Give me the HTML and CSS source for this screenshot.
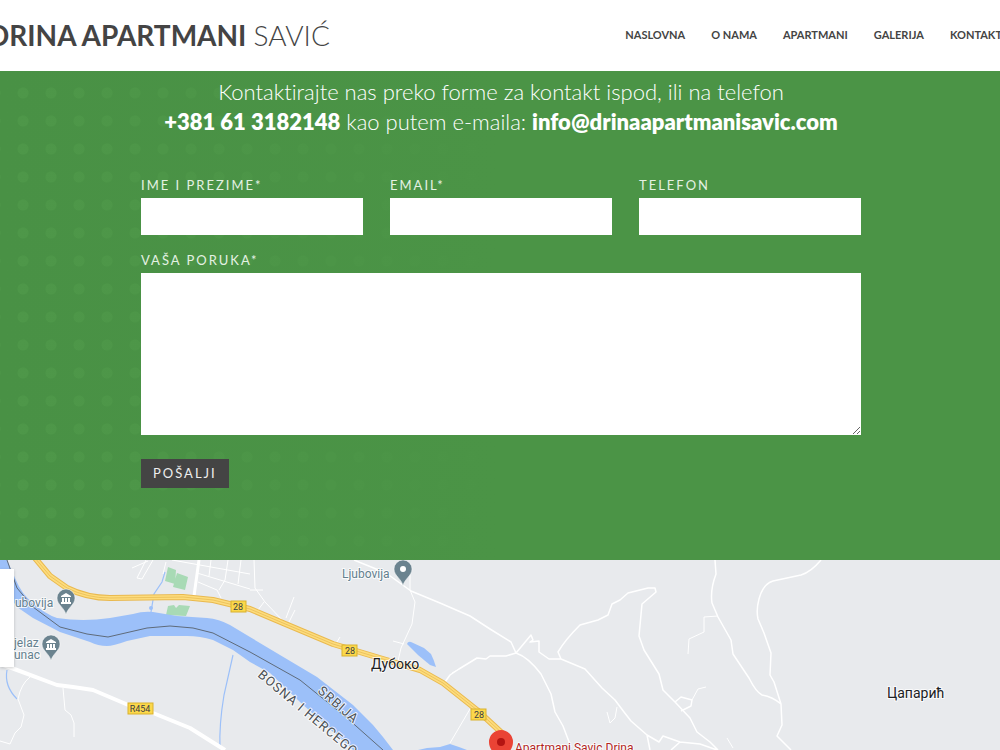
FILE: index.html
```
<!DOCTYPE html>
<html lang="sr">
<head>
  <meta charset="UTF-8" />
  <meta name="viewport" content="width=device-width, initial-scale=1" />
  <title>Drina Apartmani Savić - Kontakt</title>
  <link rel="stylesheet" href="styles.css">
</head>

<body>
  <header class="header">
    <a class="brand" href="#"><strong>DRINA APARTMANI</strong> <span>SAVIĆ</span></a>
    <nav class="menu">
      <a href="#naslovna">NASLOVNA</a>
      <a href="#onama">O NAMA</a>
      <a href="#apartmani">APARTMANI</a>
      <a href="#galerija">GALERIJA</a>
      <a href="#kontakt">KONTAKT</a>
    </nav>
  </header>

  <section class="contact" id="kontakt">
    <p class="lead">Kontaktirajte nas preko forme za kontakt ispod, ili na telefon<br>
      <strong>+381 61 3182148</strong> kao putem e-maila: <strong>info@drinaapartmanisavic.com</strong></p>

    <form class="contact-form">
      <div class="field">
        <label for="name">IME I PREZIME*</label>
        <input type="text" id="name" name="name" required>
      </div>
      <div class="field">
        <label for="email">EMAIL*</label>
        <input type="email" id="email" name="email" required>
      </div>
      <div class="field">
        <label for="phone">TELEFON</label>
        <input type="tel" id="phone" name="phone">
      </div>
      <div class="field full">
        <label for="message">VAŠA PORUKA*</label>
        <textarea id="message" name="message" required></textarea>
      </div>
      <button type="submit">POŠALJI</button>
    </form>
  </section>

  <section class="map">
    <svg viewBox="0 0 1000 190" preserveAspectRatio="xMidYMin slice" role="img" aria-label="Mapa">
      <defs>
        <path id="pin" d="M0 16C-1 9-9 6-9-1A9 9 0 0 1 9-1C9 6 1 9 0 16Z" />
        <g id="museum">
          <path d="M-5-3L0-6L5-3V-2H-5ZM-4-1h2v4h-2zM-1-1h2v4h-2zM2-1h2v4h-2zM-5 3H5V5H-5Z" />
        </g>
      </defs>

      <!-- parks -->
      <path class="park" d="M168 7l8 3-1 14-10-3zM177 13l11 4-3 13-12-3zM168 46l6-1 2 3 3-3 11 1-4 10-20-1z" />

      <!-- water -->
      <path class="water" d="M0 0H7L15 18Q22 35 33 43Q45 54 57 58Q83 62 110 58L133 54Q143 51 153 52L177 56L207 58Q219 59 230 65L250 77L280 95L317 117L353 145L373 165L383 177L393 190H353L333 172L300 142L270 113L250 102L233 90L213 80Q200 76 187 76L150 76L127 81Q113 86 107 86Q98 86 90 82L60 72L33 58L17 47L0 22Z" />
      <path class="water" d="M407 84Q408 81 411 82L424 88L431 94Q434 100 436 107L430 105L418 95Z" />
      <path class="water" d="M418 190L427 188L440 187L450 184L459 187L467 190Z" />
      <path class="stream" d="M165 12L162 22L154 34L151 52M233 95L224 135Q219 165 220 188M7 110Q4 126 17 139" />
      <circle class="water" cx="151" cy="48" r="2" />
      <path class="border" d="M7 0L17 28L33 47L60 67L87 74L108 77L147 68L170 66L193 68L213 73L250 92L300 120L347 158L383 190" />

      <!-- local roads -->
      <path class="road main" d="M0 104L17 110L57 125Q75 127 93 130L133 147L153 153L190 168L217 185L225 190" />
      <path class="road wide" d="M199 0L194 36" />
      <path class="road" d="M354 0L386 13L411 31L440 43L470 56L490 69L511 82L516 93Q528 97 541 114L551 134L555 152L563 166L571 187M516 93L506 96L490 96L486 99L477 98L459 109L450 115L445 122M516 93L531 75L533 80L530 82L539 81L539 92L549 99L561 99M561 99L558 92Q565 80 580 65L598 60L608 55L612 44L620 40L628 33L648 28L655 28L656 32L642 44L639 76L644 90L659 114L663 130L675 142L690 158L697 172L710 182L718 190M561 99L585 109L602 128L615 140L624 152L631 161L647 175L659 182L663 176L680 182L700 184L717 190M647 175L650 190M680 182L671 190" />
      <path class="road" d="M715 0L716 14Q710 30 712 43L718 57L731 80L733 94L749 118Q756 132 762 135Q773 137 781 144M821 0Q811 12 801 15L773 21Q763 24 759 39Q756 50 758 59L764 73L771 93L770 115L774 122L781 144L782 165L777 176L791 190M675 142L681 137L692 140L691 146L681 151" />
      <path class="road thin" d="M410 14V30L415 42L412 64L401 88L398 101M393 81L404 84M718 56L704 57L704 72L689 79L688 94M692 140L698 129L706 127M617 147L615 158L610 163L607 152M450 183L470 149M459 109L452 113M727 178L733 188" />
      <path class="road thin" d="M30 117Q21 124 18 139L24 155L21 167L15 173L10 184L0 181M63 128L65 150L71 155L74 163L74 177M146 0L137 18L142 19L153 0M132 8L148 1M254 0L255 28L265 42L284 62M250 30L263 30M258 50L264 42M286 58L294 37M289 62L295 50M337 82L340 77" />
      <path class="road thin" d="M172 0L250 14M197 13L250 29M198 22L217 30L221 38M228 0L225 20L219 30M211 0L209 16M241 0L238 24M166 2L163 14" />

      <!-- road 28 -->
      <path class="highway-edge" d="M35 -2L50 16L67 28Q87 38 110 38L183 37L213 40L250 49L283 63L333 84L383 99L420 110L443 123L477 150L503 174" />
      <path class="highway" d="M35 -2L50 16L67 28Q87 38 110 38L183 37L213 40L250 49L283 63L333 84L383 99L420 110L443 123L477 150L503 174" />
      <path class="highway-line" d="M35 -2L50 16L67 28Q87 38 110 38L183 37L213 40L250 49L283 63L333 84L383 99L420 110L443 123L477 150L503 174" />

      <g class="shield">
        <rect x="231" y="41" width="15" height="11" /><text x="238" y="50">28</text>
        <rect x="342" y="85" width="15" height="11" /><text x="350" y="94">28</text>
        <rect x="471" y="149" width="15" height="11" /><text x="479" y="158">28</text>
        <rect x="128" y="143" width="25" height="11" /><text x="140" y="152">R454</text>
      </g>

      <!-- labels -->
      <g class="country">
        <text transform="translate(317 132) rotate(41)">SRBIJA</text>
        <text transform="translate(257 116) rotate(40)">BOSNA I HERCEGO</text>
      </g>
      <text class="town" x="371" y="109">Дубоко</text>
      <text class="town" x="887" y="138">Цапарић</text>
      <g class="place">
        <text x="342" y="18">Ljubovija</text>
        <text x="15" y="47">ubovija</text>
        <text x="14" y="87">jelaz</text>
        <text x="14" y="99">unac</text>
      </g>

      <use class="pin" href="#pin" x="403" y="10" />
      <circle class="pin-icon" cx="403" cy="9" r="3" />
      <use class="pin" href="#pin" x="66" y="39" />
      <use class="pin-icon" href="#museum" x="66" y="39" />
      <use class="pin" href="#pin" x="51" y="85" />
      <use class="pin-icon" href="#museum" x="51" y="85" />

      <path class="marker" d="M501 205C500 197 489 192 489 182A12 12 0 0 1 513 182C513 192 502 197 501 205Z" />
      <circle class="marker-dot" cx="501" cy="182" r="4" />
      <text class="marker-label" x="515" y="192">Apartmani Savic Drina</text>
    </svg>
    <div class="map-card"></div>
  </section>
</body>
</html>
```
FILE: styles.css
```
* {
  box-sizing: border-box;
}
body {
  margin: 0;
  font-family: Lato, sans-serif;
  color: #444;
  background: #fff;
  overflow-x: hidden;
}
.header {
  display: flex;
  justify-content: space-between;
  align-items: center;
  height: 71px;
  margin: 0 -12px;
  padding-bottom: 2px;
  background: #fff;
}
.brand {
  color: #444;
  font-size: 28px;
  text-decoration: none;
  white-space: nowrap;
}
.brand strong {
  font-weight: 700;
}
.brand span {
  font-weight: 300;
}
.menu {
  display: flex;
  gap: 26px;
  margin-right: 10px;
}
.menu a {
  color: #444;
  font-size: 11px;
  font-weight: 700;
  text-decoration: none;
  white-space: nowrap;
}
.contact {
  padding: 6px 20px 72px 22px;
  color: #fff;
  background:
    linear-gradient(to right, rgba(75,148,70,0) 0, #4b9446 50%),
    radial-gradient(circle, #4e9749 5px, transparent 6px) 9px 8px / 28px 28px,
    #499145;
}
.lead {
  margin: 0 0 39px;
  font-size: 22px;
  font-weight: 300;
  line-height: 30px;
  text-align: center;
  font-variant-ligatures: none;
}
.lead strong {
  font-weight: 800;
}
.contact-form {
  display: grid;
  grid-template-columns: repeat(3, 1fr);
  column-gap: 27px;
  row-gap: 16px;
  max-width: 720px;
  margin: 0 auto;
}
.field {
  display: flex;
  flex-direction: column;
  gap: 4px;
}
.full {
  grid-column: 1 / -1;
}
.field label {
  color: #e4f1e3;
  font-size: 13px;
  line-height: 18px;
  letter-spacing: 2px;
}
.field input,
.field textarea {
  width: 100%;
  height: 37px;
  padding: 8px;
  border: 0;
  border-radius: 0;
  background: #fff;
  font: inherit;
}
.field textarea {
  height: 162px;
  resize: vertical;
}
.contact-form button {
  justify-self: start;
  height: 29px;
  margin-top: 8px;
  padding: 0 12px 2px;
  border: 0;
  color: #eee;
  background: #444;
  font-family: inherit;
  font-size: 13px;
  letter-spacing: 2px;
  cursor: pointer;
}
.map {
  position: relative;
  height: 190px;
  overflow: hidden;
  background: #e8eaed;
}
.map svg {
  display: block;
  width: 100%;
  height: 100%;
  font-family: Roboto, sans-serif;
}
.map-card {
  position: absolute;
  top: 9px;
  left: 0;
  width: 14px;
  height: 98px;
  background: #fff;
  box-shadow: 0 1px 3px rgba(0,0,0,0.2);
}
.park { fill: #a8dab5; }
.water { fill: #9cc0f9; }
.stream {
  fill: none;
  stroke: #9cc0f9;
  stroke-width: 1.2;
}
.border {
  fill: none;
  stroke: #5f6b7a;
  stroke-width: 1;
}
.road {
  fill: none;
  stroke: #fff;
  stroke-width: 1.5;
  stroke-linejoin: round;
}
.main { stroke-width: 4; }
.wide { stroke-width: 3; }
.thin { stroke-width: 1; }
.highway-edge,
.highway,
.highway-line {
  fill: none;
  stroke: #e9b94f;
  stroke-width: 6;
  stroke-linejoin: round;
}
.highway {
  stroke: #fddc7c;
  stroke-width: 4;
}
.highway-line {
  stroke: #edc35e;
  stroke-width: 1;
}
.shield rect {
  fill: #fbd84b;
  stroke: #d9b12f;
}
.shield text {
  font-size: 9px;
  text-anchor: middle;
  fill: #3c4043;
}
.country text,
.town,
.place text,
.marker-label {
  stroke: #fff;
  stroke-width: 2;
  stroke-opacity: 0.8;
  paint-order: stroke;
}
.country text {
  font-size: 13px;
  letter-spacing: 1px;
  fill: #4d5156;
}
.town {
  font-size: 14px;
  fill: #202124;
}
.place text {
  font-size: 12px;
  fill: #64808e;
}
.pin {
  fill: #6b838f;
  stroke: #fff;
  stroke-width: 0.5;
}
.pin-icon { fill: #fff; }
.marker { fill: #ea4335; }
.marker-dot { fill: #b31412; }
.marker-label {
  font-size: 12px;
  fill: #b3261e;
}
```
